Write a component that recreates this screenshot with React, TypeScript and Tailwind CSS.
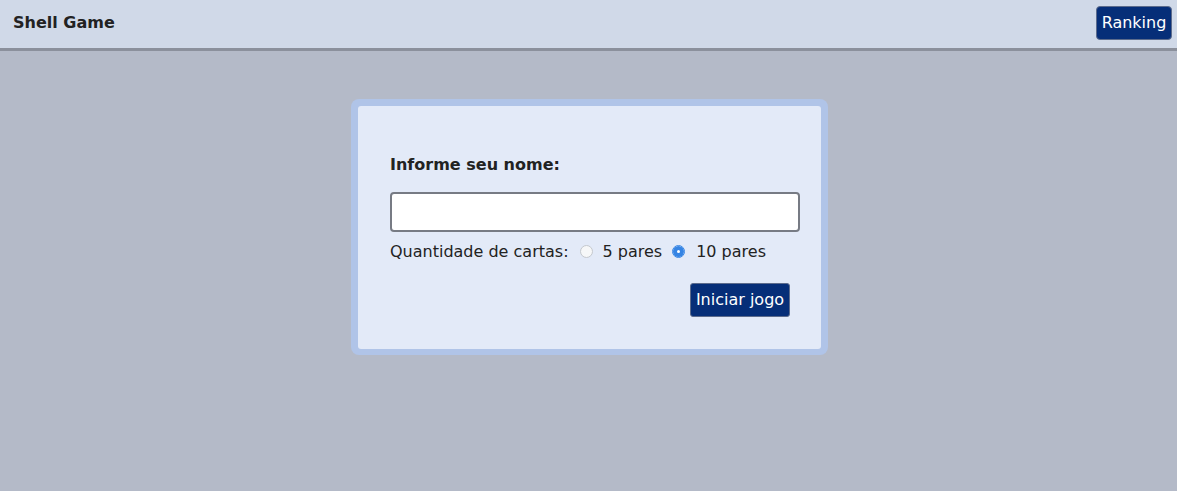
import React from "react";

export default function App() {
  return (
    <div
      className="min-h-[491px] w-full bg-[#b4bac8] text-[#222]"
      style={{ fontFamily: '"DejaVu Sans", sans-serif' }}
    >
      <header className="h-[51px] bg-[#d0d9e8] border-b-[3px] border-[#8b909c] flex items-start justify-between pl-[13px] pr-[5px]">
        <h1 className="mt-[13px] text-[16px] font-bold text-[#222] leading-[19px]">Shell Game</h1>
        <button className="mt-[6px] h-[34px] w-[76px] px-0 bg-[#062e78] text-white text-[16px] rounded-[4px] border border-[#5c6b8c]">
          Ranking
        </button>
      </header>
      <div className="flex justify-center pt-[48px] pl-[2px]">
        <div className="w-[477px] rounded-[8px] bg-[#b0c4e8] p-[7px] pb-[6px]">
          <div className="bg-[#e3eaf8] rounded-[3px] pl-[32px] pr-[22px] pt-[49px] pb-[32px]">
            <label className="block text-[16px] font-bold leading-[19px] text-[#222]">
              Informe seu nome:
            </label>
            <input
              type="text"
              className="mt-[18px] block w-[410px] h-[40px] bg-white border-2 border-[#777b84] rounded-[4px] px-2 text-[16px]"
            />
            <div className="mt-[10px] flex items-center text-[16px] leading-[19px] text-[#222]">
              <span>Quantidade de cartas:</span>
              <input
                type="radio"
                name="pares"
                className="appearance-none ml-[11px] mr-[10px] w-[13px] h-[13px] rounded-full border border-[#c4c8ce] bg-[#f6f7f8] checked:border-[#3584e4] checked:bg-white checked:shadow-[inset_0_0_0_4px_#3584e4]"
              />
              <span>5 pares</span>
              <input
                type="radio"
                name="pares"
                defaultChecked
                className="appearance-none ml-[10px] mr-[11px] w-[13px] h-[13px] rounded-full border border-[#c4c8ce] bg-[#f6f7f8] checked:border-[#3584e4] checked:bg-white checked:shadow-[inset_0_0_0_4px_#3584e4]"
              />
              <span>10 pares</span>
            </div>
            <div className="mt-[22px] flex justify-end pr-[9px]">
              <button className="w-[100px] h-[34px] bg-[#062e78] text-white text-[16px] rounded-[3px] border border-[#5c6b8c]">
                Iniciar jogo
              </button>
            </div>
          </div>
        </div>
      </div>
    </div>
  );
}
